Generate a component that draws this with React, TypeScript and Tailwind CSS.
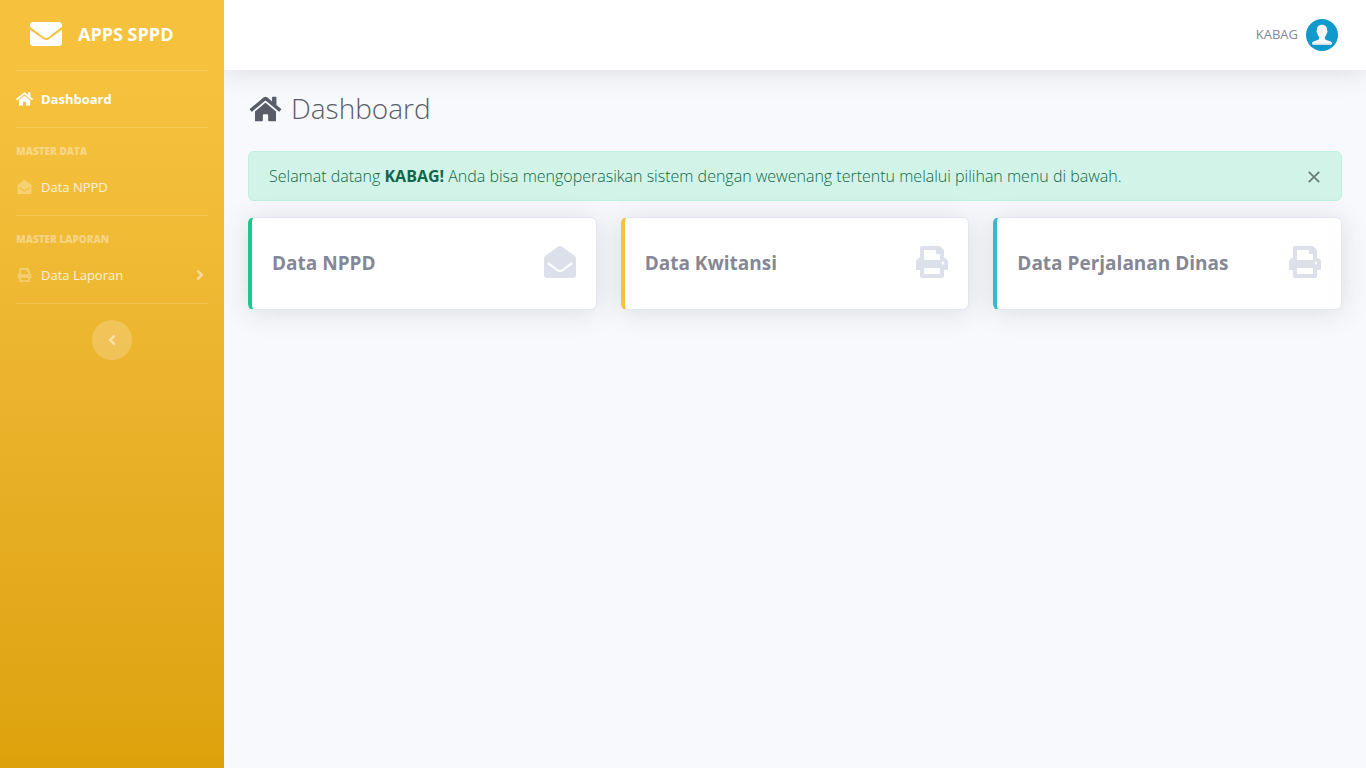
import { useState } from 'react';
import type { ReactNode } from 'react';
import type { IconType } from 'react-icons';
import { FaAngleLeft, FaAngleRight, FaEnvelope, FaEnvelopeOpen, FaHome, FaPrint } from 'react-icons/fa';

function Divider() {
  return <hr className="mx-4 border-t border-white/15" />;
}

function SectionTitle({ children }: { children: ReactNode }) {
  return <h2 className="px-4 pt-4 text-[10px] leading-[15px] font-extrabold text-white/40 uppercase">{children}</h2>;
}

function Sidebar() {
  return (
    <nav
      aria-label="Menu utama"
      className="flex w-56 shrink-0 flex-col bg-linear-to-b from-[#f6c23e] from-10% to-[#dda20a] text-[13px] leading-5"
    >
      <a href="#" className="flex h-[70px] items-center gap-4 px-[30px] pb-[2px] text-[18px] font-bold text-white">
        <FaEnvelope className="size-8" />
        <span>APPS SPPD</span>
      </a>
      <Divider />
      <a href="#dashboard" aria-current="page" className="flex h-14 items-center gap-2 px-4 font-bold text-white">
        <FaHome className="h-4 w-[17px]" />
        Dashboard
      </a>
      <Divider />
      <SectionTitle>Master Data</SectionTitle>
      <a href="#nppd" className="flex h-14 items-center gap-2 px-4 text-white/80">
        <FaEnvelopeOpen className="h-[14px] w-[17px] text-white/30" />
        Data NPPD
      </a>
      <Divider />
      <SectionTitle>Master Laporan</SectionTitle>
      <a href="#laporan" className="flex h-14 items-center gap-2 px-4 text-white/80">
        <FaPrint className="h-[14px] w-[17px] text-white/30" />
        Data Laporan
        <FaAngleRight className="mr-1 ml-auto h-4 w-2 text-white/50" />
      </a>
      <Divider />
      <button
        type="button"
        aria-label="Ciutkan menu"
        className="mt-4 flex size-10 items-center justify-center self-center rounded-full bg-white/20 text-white/50"
      >
        <FaAngleLeft className="h-4 w-2" />
      </button>
    </nav>
  );
}

function Avatar() {
  return (
    <svg viewBox="0 0 32 32" className="size-8" aria-hidden="true">
      <circle cx="16" cy="16" r="16" fill="#1099cb" />
      <path
        d="M16 5.8c3.3 0 5.2 2.1 5.1 5.2 0 .5.5.8.4 1.6-.1.9-.6 1.3-.8 1.9-.4 1.5-1 2.6-1.8 3.4v2.2c.7 1.3 3.3 1.4 5.1 2.1 1.5.5 2 1.2 2 2 0 .6-.5 1-1.2 1H7.2c-.7 0-1.2-.4-1.2-1 0-.8.5-1.5 2-2 1.8-.7 4.4-.8 5.1-2.1v-2.2c-.8-.8-1.4-1.9-1.8-3.4-.2-.6-.7-1-.8-1.9-.1-.8.4-1.1.4-1.6C10.8 7.9 12.7 5.8 16 5.8z"
        fill="#fbf7f7"
      />
      <path d="M6.2 24.4h19.6c-.1.9-.6 1.5-1.5 1.5H7.7c-.9 0-1.4-.6-1.5-1.5z" fill="#d5dde4" />
    </svg>
  );
}

function Topbar() {
  return (
    <header className="relative flex h-[70px] items-center justify-end bg-white px-7 shadow-[0_2px_28px_rgba(58,59,69,0.15)]">
      <a href="#profil" className="flex items-center gap-2 text-[13px] text-[#858796]">
        KABAG
        <Avatar />
      </a>
    </header>
  );
}

const cards: { title: string; href: string; icon: IconType; accent: string }[] = [
  { title: 'Data NPPD', href: '#nppd', icon: FaEnvelopeOpen, accent: 'border-l-[#1cc88a]' },
  { title: 'Data Kwitansi', href: '#kwitansi', icon: FaPrint, accent: 'border-l-[#f6c23e]' },
  { title: 'Data Perjalanan Dinas', href: '#perjalanan', icon: FaPrint, accent: 'border-l-[#36b9cc]' },
];

function WelcomeAlert({ onClose }: { onClose: () => void }) {
  return (
    <div
      role="alert"
      className="mb-4 flex items-center justify-between rounded-md border border-[#bff0de] bg-[#d2f4e8] px-5 py-3 text-base leading-6 font-light text-[#0f6848]"
    >
      <p>
        Selamat datang <strong className="font-bold">KABAG!</strong> Anda bisa mengoperasikan sistem dengan wewenang
        tertentu melalui pilihan menu di bawah.
      </p>
      <button type="button" aria-label="Tutup" onClick={onClose} className="pt-[2px] text-black/50">
        <svg viewBox="0 0 14 14" className="size-[14px]" aria-hidden="true">
          <path d="M1.8 1.8l10.4 10.4M12.2 1.8L1.8 12.2" stroke="currentColor" strokeWidth="1.7" fill="none" />
        </svg>
      </button>
    </div>
  );
}

export default function App() {
  const [welcome, setWelcome] = useState(true);
  return (
    <div className="flex min-h-screen bg-[#f8f9fc] font-['Open_Sans',sans-serif]">
      <Sidebar />
      <div className="min-w-0 flex-1 overflow-hidden">
        <Topbar />
        <main className="px-6 pt-[22px] pb-6">
          <h1 className="mb-[26px] flex items-center gap-2 text-[28px] leading-[33px] font-light text-[#5a5c69]">
            <FaHome className="h-7 w-[35px]" />
            Dashboard
          </h1>
          {welcome && <WelcomeAlert onClose={() => setWelcome(false)} />}
          <div className="grid grid-cols-1 gap-6 md:grid-cols-3">
            {cards.map(({ title, href, icon: Icon, accent }) => (
              <a
                key={title}
                href={href}
                className={`flex items-start justify-between rounded-md border border-l-4 border-[#e3e6f0] bg-white px-5 py-7 shadow-[0_2px_28px_rgba(58,59,69,0.15)] ${accent}`}
              >
                <span className="text-[19px] leading-[35px] font-bold text-[#858796]">{title}</span>
                <Icon className="size-8 shrink-0 text-[#dddfeb]" />
              </a>
            ))}
          </div>
        </main>
      </div>
    </div>
  );
}
